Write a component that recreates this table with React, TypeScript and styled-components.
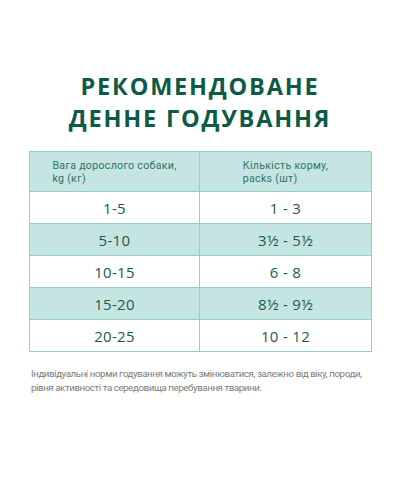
import React from 'react'
import styled, { createGlobalStyle } from 'styled-components'

const GlobalStyle = createGlobalStyle`
  html, body {
    margin: 0;
    padding: 0;
    background: #ffffff;
  }
  body {
    font-family: Roboto, "Open Sans", sans-serif;
  }
`

const Page = styled.div`
  width: 400px;
  height: 500px;
  box-sizing: border-box;
  padding: 70px 29px 0;
  display: flex;
  flex-direction: column;
`

const Title = styled.h1`
  margin: 0 0 17px;
  text-align: center;
  font-family: "Open Sans", sans-serif;
  font-weight: 700;
  font-size: 23.5px;
  line-height: 32px;
  letter-spacing: 1.8px;
  color: #0d5a47;
  text-transform: uppercase;
`

const Table = styled.div`
  display: grid;
  grid-template-columns: 170px 172px;
  border: 1px solid #8fd0c7;
  border-right-width: 0;
  border-bottom-width: 0;
`

const Cell = styled.div<{ $shaded?: boolean; $header?: boolean }>`
  display: flex;
  align-items: center;
  justify-content: center;
  box-sizing: border-box;
  height: ${p => (p.$header ? '40px' : '32px')};
  background: ${p => (p.$shaded ? '#c5e5e2' : '#ffffff')};
  border-right: 1px solid #8fd0c7;
  border-bottom: 1px solid #8fd0c7;
  color: #1c5a4d;
  font-family: "Open Sans", sans-serif;
  font-size: 15px;
  letter-spacing: 0.3px;
`

const HeaderText = styled.span`
  display: inline-block;
  text-align: left;
  font-family: Roboto, sans-serif;
  font-size: 10.6px;
  line-height: 13px;
  color: #2f7466;
`

const Note = styled.p`
  margin: 15px 0 0 2px;
  font-family: Roboto, sans-serif;
  font-size: 9.7px;
  line-height: 14px;
  letter-spacing: -0.4px;
  color: #7b7b7b;
  white-space: nowrap;
`

const rows = [
  ['1-5', '1 - 3'],
  ['5-10', '3½ - 5½'],
  ['10-15', '6 - 8'],
  ['15-20', '8½ - 9½'],
  ['20-25', '10 - 12'],
]

export default function App() {
  return (
    <>
      <GlobalStyle />
      <Page>
        <Title>
          Рекомендоване
          <br />
          денне годування
        </Title>
        <Table>
          <Cell $header $shaded>
            <HeaderText>
              Вага дорослого собаки,
              <br />
              kg (кг)
            </HeaderText>
          </Cell>
          <Cell $header $shaded>
            <HeaderText>
              Кількість корму,
              <br />
              packs (шт)
            </HeaderText>
          </Cell>
          {rows.map(([weight, packs], i) => (
            <React.Fragment key={weight}>
              <Cell $shaded={i % 2 === 1}>{weight}</Cell>
              <Cell $shaded={i % 2 === 1}>{packs}</Cell>
            </React.Fragment>
          ))}
        </Table>
        <Note>
          Індивідуальні норми годування можуть змінюватися, залежно від віку, породи,
          <br />
          рівня активності та середовища перебування тварини.
        </Note>
      </Page>
    </>
  )
}
